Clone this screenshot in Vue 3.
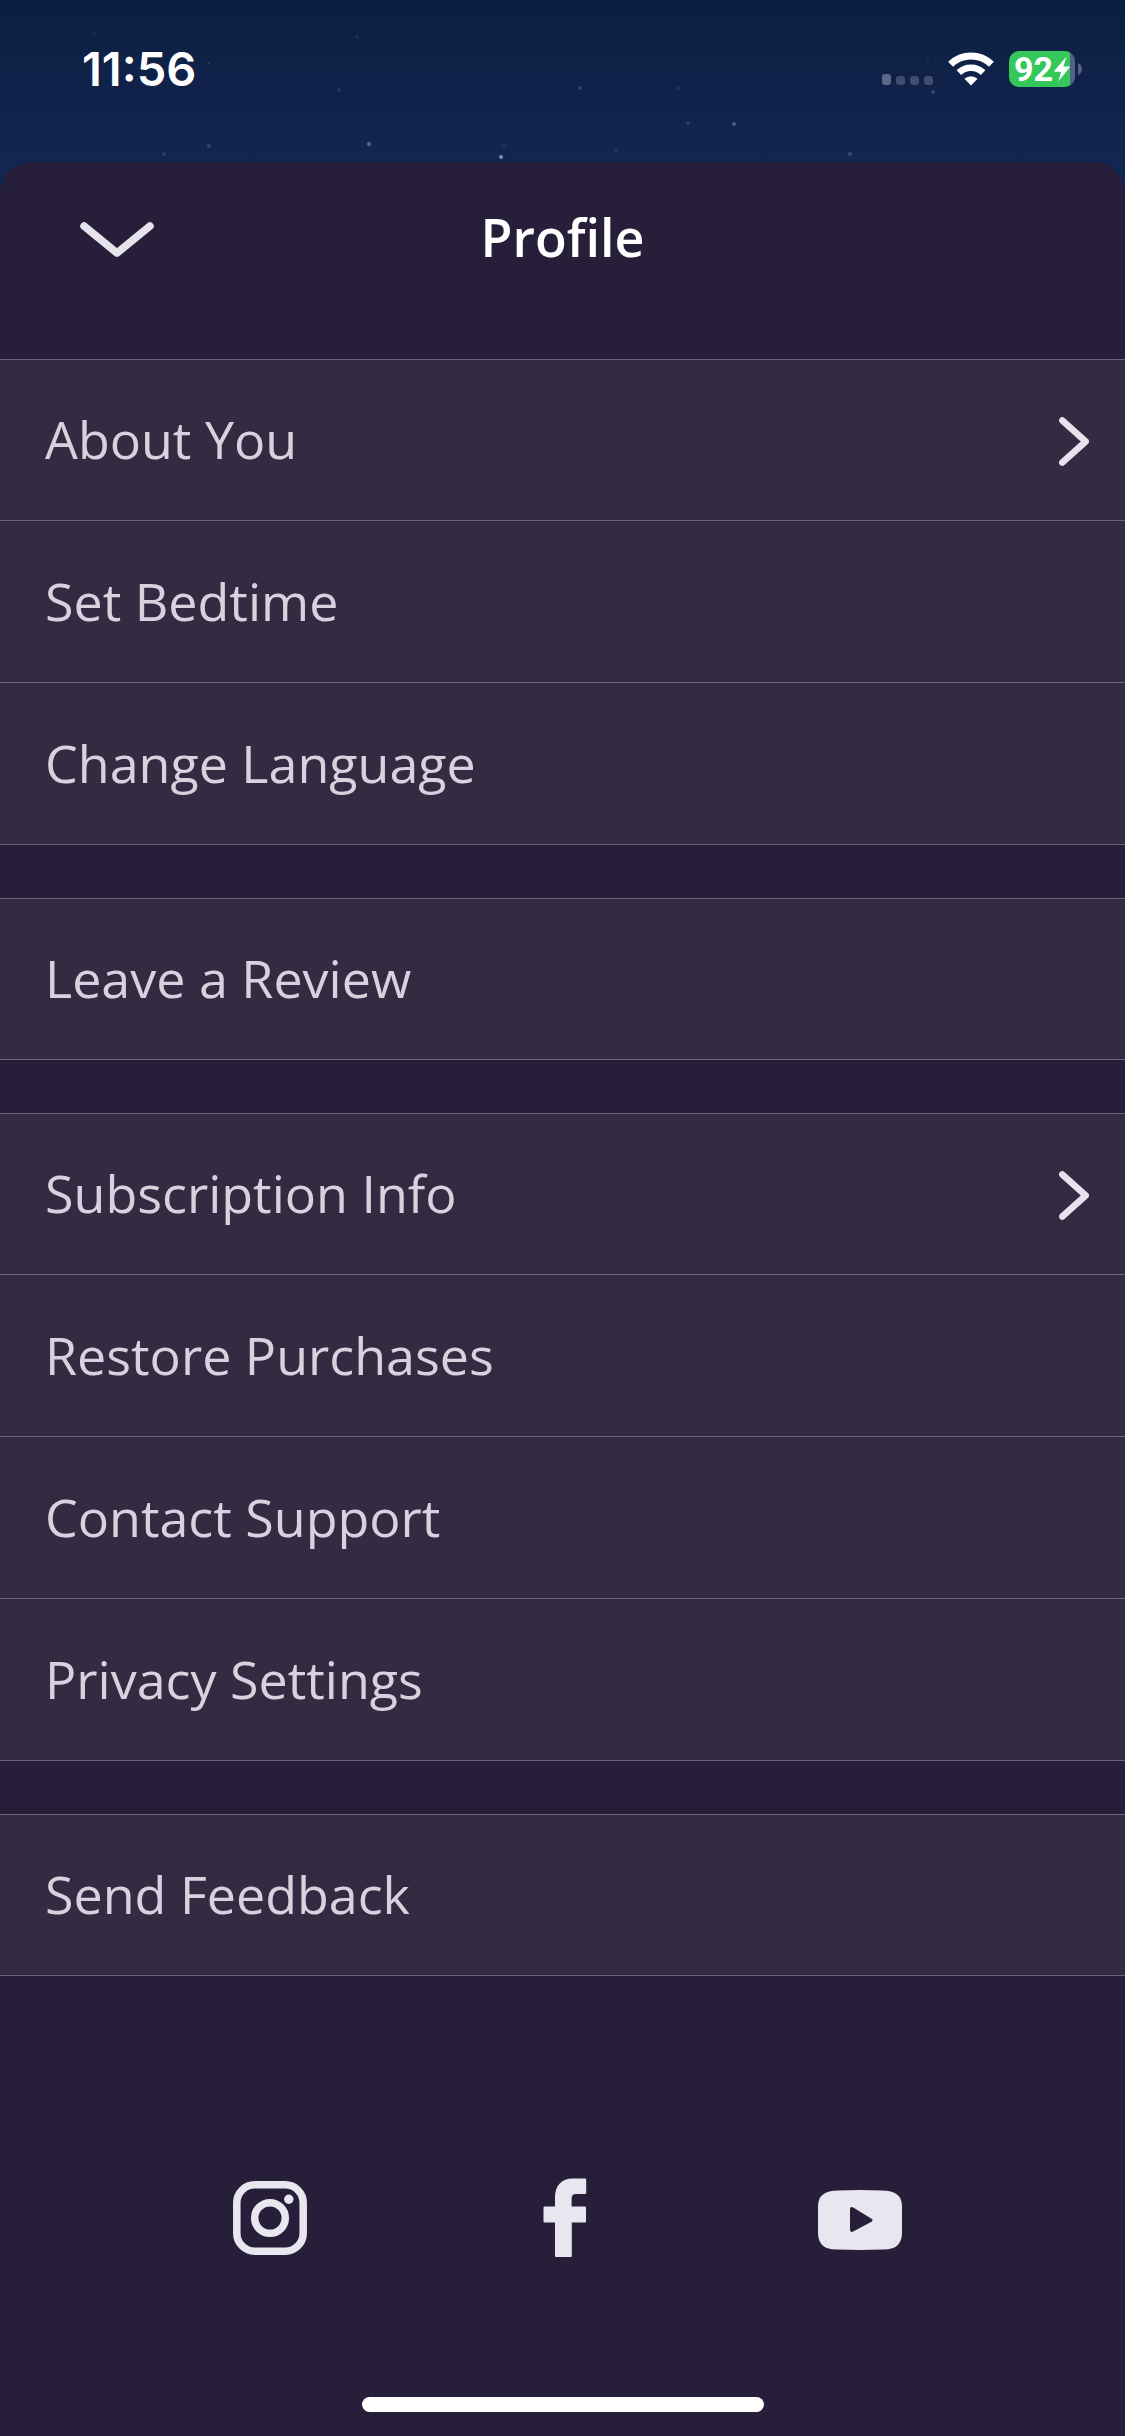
<script setup>
const groups = [
  [
    { label: 'About You', chevron: true },
    { label: 'Set Bedtime' },
    { label: 'Change Language' },
  ],
  [{ label: 'Leave a Review' }],
  [
    { label: 'Subscription Info', chevron: true },
    { label: 'Restore Purchases' },
    { label: 'Contact Support' },
    { label: 'Privacy Settings' },
  ],
  [{ label: 'Send Feedback' }],
]

const stars = [
  [94, 34, 2, 0.08], [357, 37, 1, 0.2], [209, 63, 1, 0.2], [339, 90, 2, 0.1],
  [209, 146, 2, 0.18], [164, 154, 2, 0.14], [369, 144, 2, 0.4], [501, 157, 2, 0.6],
  [504, 146, 3, 0.06], [580, 88, 2, 0.18], [678, 88, 2, 0.09], [688, 123, 2, 0.12],
  [734, 124, 2, 0.3], [616, 150, 2, 0.1], [850, 154, 2, 0.22], [933, 92, 2, 0.2],
  [928, 62, 1, 0.15],
]
</script>

<template>
  <div class="screen">
    <svg class="stars" width="1125" height="162" viewBox="0 0 1125 162" aria-hidden="true">
      <circle v-for="(s, i) in stars" :key="i" :cx="s[0]" :cy="s[1]" :r="s[2]" :fill-opacity="s[3]" fill="#c3d2ff" />
    </svg>

    <header class="status">
      <time class="clock">11:56</time>
      <div class="indicators">
        <svg width="52" height="36" viewBox="0 0 52 36" aria-label="No signal">
          <rect x="0" y="23" width="9" height="11" rx="3" fill="#5d6985" />
          <rect x="14" y="25" width="9" height="9" rx="3" fill="#414d70" />
          <rect x="28" y="25" width="9" height="9" rx="3" fill="#414d70" />
          <rect x="42" y="25" width="9" height="9" rx="3" fill="#414d70" />
        </svg>
        <svg class="wifi" width="46" height="36" viewBox="0 0 46 36" fill="none" stroke="#fff" aria-label="Wi-Fi">
          <path d="M2.600 13.200a29.200 29.200 0 0 1 40.800 0" stroke-width="7" />
          <path d="M10.900 21.600a17.400 17.400 0 0 1 24.200 0" stroke-width="6.600" />
          <path d="M23 34.500l-6.600-6.700a9.600 9.600 0 0 1 13.200 0z" fill="#fff" stroke="none" />
        </svg>
        <div class="battery">
          <div class="cell">
            <span>92</span>
            <svg width="16" height="26" viewBox="0 0 16 26" aria-label="Charging">
              <path d="M12.500 0.500 0.600 14.600q-.5 1 .6 1.100h6L4.200 25.400 15.600 11.600q.6-1-.6-1.200H9.400z" fill="#fff" />
            </svg>
          </div>
          <svg width="4" height="12" viewBox="0 0 4 12" aria-hidden="true">
            <path d="M0 0c5.300 2 5.300 10 0 12z" fill="#56618a" />
          </svg>
        </div>
      </div>
    </header>

    <main class="sheet">
      <div class="titlebar">
        <button class="close" type="button" aria-label="Close">
          <svg width="74" height="40" viewBox="0 0 74 40" fill="none" stroke="#e6e3ed" stroke-width="7.500" stroke-linecap="round" stroke-linejoin="round">
            <path d="M4 9l33 27L70 9" />
          </svg>
        </button>
        <h1>Profile</h1>
      </div>

      <nav class="menu">
        <ul v-for="(group, g) in groups" :key="g" class="group">
          <li v-for="item in group" :key="item.label">
            <button class="row" type="button">
              <span class="label">{{ item.label }}</span>
              <svg v-if="item.chevron" width="30" height="52" viewBox="0 0 30 52" fill="none" stroke="#e6e3ed" stroke-width="6.500" stroke-linecap="round" stroke-linejoin="round" aria-hidden="true">
                <path d="M3.300 6.500l23.400 21L3.300 48.500" />
              </svg>
            </button>
          </li>
        </ul>
      </nav>

      <div class="social">
        <a href="#instagram" aria-label="Instagram">
          <svg width="74" height="74" viewBox="0 0 74 74" fill="none" stroke="#e8e6ef" stroke-width="7.500">
            <rect x="3.800" y="3.800" width="66.400" height="66.400" rx="18" />
            <circle cx="37" cy="37" r="15.300" />
            <circle cx="55.800" cy="18.200" r="4.700" fill="#e8e6ef" stroke="none" />
          </svg>
        </a>
        <a href="#facebook" aria-label="Facebook">
          <svg width="44" height="80" viewBox="0 0 44 80" fill="#e8e6ef">
            <path d="M13 79q-1 0-1-1V44.600H1.500q-1 0-1-1v-14q0-1 1-1H12V19C12 7.500 19 .5 29.500.5h12.500q1.200 0 1.200 1.200v13q0 1.200-1.200 1.200h-9q-4.400 0-4.400 4.400v8.300h13.200q1.200 0 1.200 1.200v13.600q0 1.200-1.200 1.200H28.800V78q0 1-1 1z" />
          </svg>
        </a>
        <a href="#youtube" aria-label="YouTube">
          <svg width="84" height="64" viewBox="0 -4 84 64" fill="#e8e6ef">
            <path fill-rule="evenodd" d="M20 .4Q42-.4 64 .4 84 .4 84 16q.6 14 0 28Q83 59.600 66 59.600q-24 .8-48 0Q1 59.600 0 44q-.6-14 0-28Q0 .4 20 .4zM32 19v20.500q0 3.500 3.200 2l18.300-9.700q2.200-1.500 0-3L35.200 17.500Q32 15.800 32 19z" />
          </svg>
        </a>
      </div>

      <div class="home" aria-hidden="true"></div>
    </main>
  </div>
</template>

<style>
body {
  margin: 0;
  background: #271e3a;
}
</style>

<style scoped>
.screen {
  position: relative;
  display: flex;
  flex-direction: column;
  min-height: 100vh;
  background: linear-gradient(#0a2040 0, #11224a 90px, #14264f 162px, #10255a 200px, #271e3a 240px);
  font-family: "Open Sans", "Noto Sans", sans-serif;
}

.stars {
  position: absolute;
  top: 0;
  left: 0;
}

.status {
  position: relative;
  display: flex;
  align-items: center;
  justify-content: space-between;
  box-sizing: border-box;
  height: 162px;
  padding: 0 43px 24px 82px;
  color: #fff;
}

.clock {
  font: 600 47px/60px Inter, sans-serif;
}

.indicators,
.battery,
.cell {
  display: flex;
  align-items: center;
}

.wifi {
  margin: 0 15px 0 14px;
}

.battery {
  gap: 3px;
}

.cell {
  box-sizing: border-box;
  gap: 1px;
  width: 66px;
  height: 36px;
  padding-left: 5px;
  border-radius: 10px;
  background: linear-gradient(90deg, #34c759 61px, #56618a 61px);
  font: 700 34px/36px Roboto, sans-serif;
}

.sheet {
  position: relative;
  display: flex;
  flex: 1;
  flex-direction: column;
  border-radius: 32px 32px 0 0;
  background: #271e3a;
}

.titlebar {
  display: grid;
  grid-template-columns: 1fr auto 1fr;
  align-items: center;
  height: 150px;
  padding: 0 80px;
  margin-bottom: 47px;
}

.close {
  justify-self: start;
  padding: 0;
  border: 0;
  background: none;
}

.close svg {
  display: block;
}

h1 {
  margin: 0;
  color: #fff;
  font-size: 52px;
  font-weight: 600;
  line-height: 72px;
}

.menu {
  display: flex;
  flex-direction: column;
  gap: 53px;
}

.group {
  margin: 0;
  padding: 0;
  list-style: none;
}

.row {
  display: flex;
  align-items: center;
  justify-content: space-between;
  box-sizing: border-box;
  width: 100%;
  height: 162px;
  padding: 0 36px 0 45px;
  border: 0 solid #6c637f;
  border-bottom-width: 1px;
  background: #342b43;
  color: #d8d2df;
  font: 400 52px/72px "Open Sans", "Noto Sans", sans-serif;
  text-align: left;
}

.group li:first-child .row {
  border-top-width: 1px;
}

.label {
  padding-bottom: 2px;
}

.social {
  display: grid;
  grid-template-columns: repeat(3, 1fr);
  margin-top: 182px;
  padding: 0 118px 0 123px;
}

.social a {
  display: flex;
  align-items: center;
  justify-content: center;
  height: 120px;
}

.home {
  width: 402px;
  height: 15px;
  margin: auto auto 24px;
  border-radius: 8px;
  background: #fff;
}
</style>
